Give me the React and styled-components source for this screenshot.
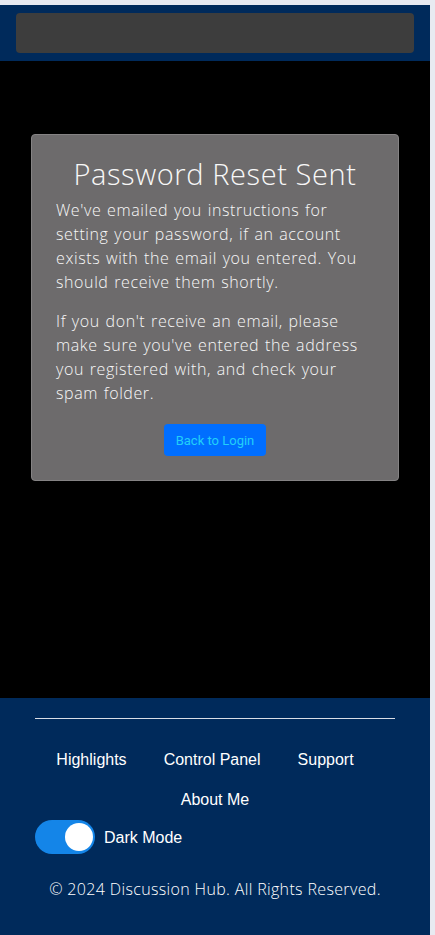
import React, { useState } from 'react'
import styled, { createGlobalStyle } from 'styled-components'

const GlobalStyle = createGlobalStyle`
  html, body {
    margin: 0;
    padding: 0;
    background: #e8eaf1;
  }
  #root {
    padding-top: 5px;
  }
`

function App() {
  const [dark, setDark] = useState(true) // dark mode switch
  const links = ['Highlights', 'Control Panel', 'Support', 'About Me']

  return (
    <>
      <GlobalStyle />
      <Page>
        <Header>
          <SearchBar />
        </Header>

        <Main>
          <Card>
            <Title>Password Reset Sent</Title>
            <Text>
              We've emailed you instructions for setting your password, if an
              account exists with the email you entered. You should receive them
              shortly.
            </Text>
            <Text>
              If you don't receive an email, please make sure you've entered the
              address you registered with, and check your spam folder.
            </Text>
            <Actions>
              <LoginBtn>Back to Login</LoginBtn>
            </Actions>
          </Card>
        </Main>

        <Footer>
          <Rule />
          <Nav>
            {links.map((l) => (
              <NavLink key={l} href="#">
                {l}
              </NavLink>
            ))}
          </Nav>
          <ToggleRow>
            <Switch on={dark} onClick={() => setDark(!dark)}>
              <Knob on={dark} />
            </Switch>
            <ToggleLabel>Dark Mode</ToggleLabel>
          </ToggleRow>
          <Copy>© 2024 Discussion Hub. All Rights Reserved.</Copy>
        </Footer>
      </Page>
    </>
  )
}

const Page = styled.div`
  width: 430px;
  display: flex;
  flex-direction: column;
`
const Header = styled.header`
  background: #002a5b;
  padding: 8px 16px;
`
const SearchBar = styled.div`
  height: 40px;
  background: #3d3d3d;
  border-radius: 4px;
`
const Main = styled.main`
  background: #000;
  height: 637px;
  padding: 73px 31px 0;
  box-sizing: border-box;
`
const Card = styled.div`
  background: #6d6b6c;
  border: 1px solid #858384;
  border-radius: 4px;
  padding: 19px 24px 24px 24px;
  color: #f8f8f8;
  font-family: 'Open Sans', sans-serif;
`
const Title = styled.h2`
  margin: 0 0 4px;
  text-align: center;
  font-weight: 300;
  font-size: 29px;
  letter-spacing: 0.6px;
  line-height: 40px;
`
const Text = styled.p`
  margin: 0 0 15px;
  font-size: 16px;
  line-height: 24px;
  font-weight: 300;
  letter-spacing: 0.6px;
  word-spacing: 1px;
`
const Actions = styled.div`
  display: flex;
  justify-content: center;
  padding-top: 4px;
`
const LoginBtn = styled.button`
  width: 102px;
  height: 32px;
  border: none;
  border-radius: 4px;
  background: #006eff;
  color: #22d0f8;
  font-family: Roboto, sans-serif;
  font-size: 13px;
  cursor: pointer;
`
const Footer = styled.footer`
  background: #002a5b;
  height: 237px;
  padding: 20px 35px 0;
  box-sizing: border-box;
  display: flex;
  flex-direction: column;
`
const Rule = styled.div`
  height: 1px;
  background: #d9dde6;
`
const Nav = styled.nav`
  display: flex;
  flex-wrap: wrap;
  justify-content: center;
  column-gap: 37px;
  margin-top: 21px;
  padding-right: 20px;
`
const NavLink = styled.a`
  color: #fff;
  text-decoration: none;
  font-family: 'Liberation Sans', Arial, sans-serif;
  font-size: 16px;
  line-height: 40px;

  &:last-child {
    margin-left: 20px;
  }
`
const ToggleRow = styled.div`
  display: flex;
  align-items: center;
  gap: 9px;
`
const Switch = styled.div`
  width: 60px;
  height: 34px;
  border-radius: 17px;
  background: ${(p) => (p.on ? '#1485e8' : '#888')};
  position: relative;
  cursor: pointer;
`
const Knob = styled.div`
  position: absolute;
  top: 3px;
  left: ${(p) => (p.on ? '30px' : '3px')};
  width: 28px;
  height: 28px;
  border-radius: 50%;
  background: #fff;
`
const ToggleLabel = styled.span`
  color: #fff;
  font-family: 'Liberation Sans', Arial, sans-serif;
  font-size: 16px;
  padding-top: 2px;
`
const Copy = styled.p`
  margin: 23px 0 0;
  text-align: center;
  color: #fff;
  font-family: 'Open Sans', sans-serif;
  font-weight: 300;
  font-size: 16px;
  letter-spacing: 0.35px;
  line-height: 24px;
`

export default App
